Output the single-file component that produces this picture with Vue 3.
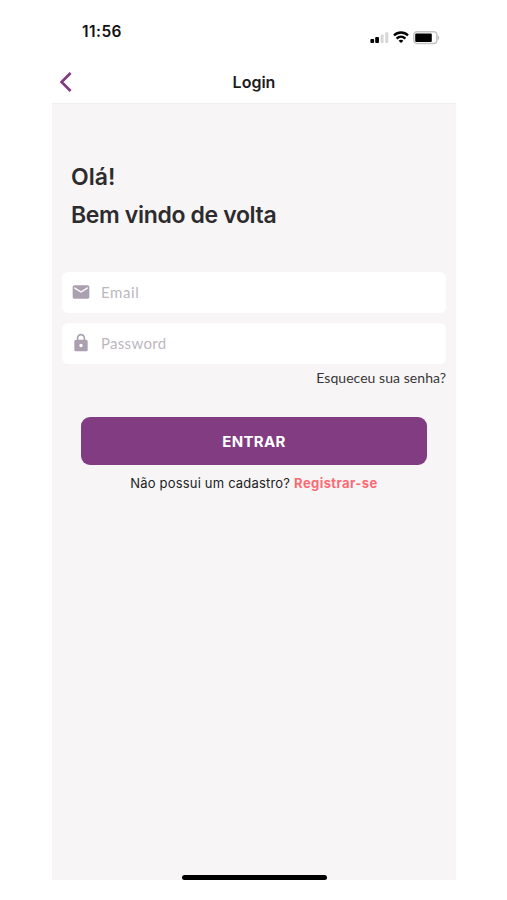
<template>
  <div class="screen">
    <div class="status-bar">
      <span class="time">11:56</span>
      <div class="status-icons">
        <svg class="signal" width="19" height="12" viewBox="0 0 19 12">
          <rect x="0.4" y="8" width="3.7" height="4" rx="1" fill="#000" />
          <rect x="5.2" y="6" width="3.8" height="6" rx="1" fill="#000" />
          <rect x="10.6" y="3.5" width="3" height="8.5" rx="1" fill="#d6d6d6" />
          <rect x="15.3" y="1.2" width="3" height="10.8" rx="1" fill="#d6d6d6" />
        </svg>
        <svg class="wifi" width="16" height="12" viewBox="0 0 16 12">
          <g fill="none" stroke="#000" stroke-width="2.3">
            <path d="M1 4.4C5 .5 11 .5 15 4.4" />
            <path d="M3.6 7.6C6.2 5.1 9.8 5.1 12.4 7.6" />
          </g>
          <path d="M5.6 9.7Q8 7.9 10.4 9.7L8 12Z" fill="#000" />
        </svg>
        <svg class="battery" width="27" height="14" viewBox="0 0 27 14">
          <rect x="0.8" y="0.8" width="23" height="11.7" rx="3" fill="#fff" stroke="#c4c4c4" stroke-width="1.4" />
          <rect x="2.2" y="2.6" width="16.6" height="8.4" rx="1" fill="#000" />
          <path d="M25 4.8Q26.8 6.8 25 8.8Z" fill="#b5b5b5" stroke="#b5b5b5" stroke-width="0.6" />
        </svg>
      </div>
    </div>

    <header class="header">
      <button class="btn-back" aria-label="Voltar">
        <svg width="14" height="22" viewBox="0 0 14 22">
          <path d="M11.6 2L2.6 11L11.6 20" fill="none" stroke="#813c82" stroke-width="2.7" />
        </svg>
      </button>
      <h1 class="header-title">Login</h1>
    </header>

    <main class="content">
      <div class="greeting">
        <h2 class="hello">Olá!</h2>
        <h2 class="welcome">Bem vindo de volta</h2>
      </div>

      <form class="form" @submit.prevent>
        <label class="field">
          <svg class="field-icon" width="20" height="20" viewBox="0 0 24 24">
            <path d="M20 4H4c-1.1 0-2 .9-2 2v12c0 1.1.9 2 2 2h16c1.1 0 2-.9 2-2V6c0-1.1-.9-2-2-2zm0 4l-8 5-8-5V6l8 5 8-5v2z" />
          </svg>
          <input v-model="email" class="email" type="email" placeholder="Email" />
        </label>
        <label class="field">
          <svg class="field-icon" width="20" height="20" viewBox="0 0 24 24">
            <path d="M18 8h-1V6c0-2.76-2.24-5-5-5S7 3.24 7 6v2H6c-1.1 0-2 .9-2 2v10c0 1.1.9 2 2 2h12c1.1 0 2-.9 2-2V10c0-1.1-.9-2-2-2zm-6 9c-1.1 0-2-.9-2-2s.9-2 2-2 2 .9 2 2-.9 2-2 2zm3.1-9H8.9V6c0-1.71 1.39-3.1 3.1-3.1 1.71 0 3.1 1.39 3.1 3.1v2z" />
          </svg>
          <input v-model="password" type="password" placeholder="Password" />
        </label>
        <a class="forgot">Esqueceu sua senha?</a>
        <button class="btn-login" type="submit">ENTRAR</button>
      </form>

      <p class="register">
        <span class="register-text">Não possui um cadastro?</span>
        <a class="register-link">Registrar-se</a>
      </p>
    </main>

    <div class="home-indicator"></div>
  </div>
</template>

<script setup>
import { ref } from 'vue';

const email = ref('');
const password = ref('');
</script>

<style>
body {
  background: #fff;
}
</style>

<style scoped>
.screen {
  box-sizing: border-box;
  width: 404px;
  height: 880px;
  margin-left: 52px;
  display: flex;
  flex-direction: column;
  align-items: stretch;
  background: #f7f5f6;
  font-family: Inter, "Liberation Sans", sans-serif;
}

.status-bar {
  height: 62px;
  display: flex;
  justify-content: space-between;
  background: #fff;
}

.time {
  margin: 22px 0 0 30px;
  font-size: 15.5px;
  line-height: 20px;
  font-weight: 600;
  letter-spacing: 0.45px;
  color: #111;
}

.status-icons {
  display: flex;
  align-items: flex-start;
  padding: 31px 16px 0 0;
}

.wifi {
  margin-left: 4px;
}

.battery {
  margin-left: 4px;
}

.header {
  box-sizing: border-box;
  height: 42px;
  padding-bottom: 1px;
  display: grid;
  grid-template-columns: 40px 1fr 40px;
  align-items: center;
  background: #fff;
  border-bottom: 1px solid #f0eff0;
}

.btn-back {
  display: flex;
  padding: 0 0 0 7px;
  border: none;
  background: none;
  cursor: pointer;
}

.header-title {
  margin: 0;
  text-align: center;
  font-size: 16px;
  line-height: 20px;
  font-weight: 600;
  color: #1c1c1c;
}

.content {
  flex: 1;
  padding: 54px 10px 0;
}

.greeting h2 {
  margin: 0 0 0 9px;
  font-size: 23px;
  line-height: 38px;
  font-weight: 600;
  color: #2d2b2d;
}

.greeting .welcome {
  letter-spacing: -0.35px;
}

.form {
  display: flex;
  flex-direction: column;
  margin-top: 38px;
}

.field {
  height: 41px;
  margin-bottom: 10px;
  padding-left: 9px;
  display: flex;
  align-items: center;
  gap: 10px;
  background: #fff;
  border-radius: 6px;
}

.field-icon {
  flex: none;
  margin-bottom: 2px;
  fill: #aba0b0;
}

.field input {
  flex: 1;
  min-width: 0;
  padding: 0 0 2px;
  border: none;
  outline: none;
  background: none;
  font-family: Lato, "Liberation Sans", sans-serif;
  font-size: 15px;
  letter-spacing: 0.3px;
  color: #2d2b2d;
}

.field .email {
  letter-spacing: 0.6px;
}

.field input::placeholder {
  color: #bcb7be;
  opacity: 1;
}

.forgot {
  align-self: flex-end;
  margin-top: -6px;
  font-family: Lato, "Liberation Sans", sans-serif;
  font-size: 14px;
  line-height: 20px;
  letter-spacing: 0.05px;
  color: #373537;
}

.btn-login {
  height: 48px;
  margin: 29px 19px 0;
  border: none;
  border-radius: 9px;
  background: #813c82;
  color: #fff;
  font-family: inherit;
  font-size: 15px;
  font-weight: 700;
  letter-spacing: 0.3px;
  cursor: pointer;
}

.register {
  display: flex;
  justify-content: center;
  gap: 4px;
  margin: 8px 0 0;
  font-size: 13px;
  line-height: 20px;
  letter-spacing: 0.18px;
  color: #222;
}

.register-link {
  font-weight: 700;
  letter-spacing: 0.42px;
  color: #fa6a75;
}

.home-indicator {
  align-self: center;
  width: 145px;
  height: 5px;
  border-radius: 3px;
  background: #000;
}
</style>
